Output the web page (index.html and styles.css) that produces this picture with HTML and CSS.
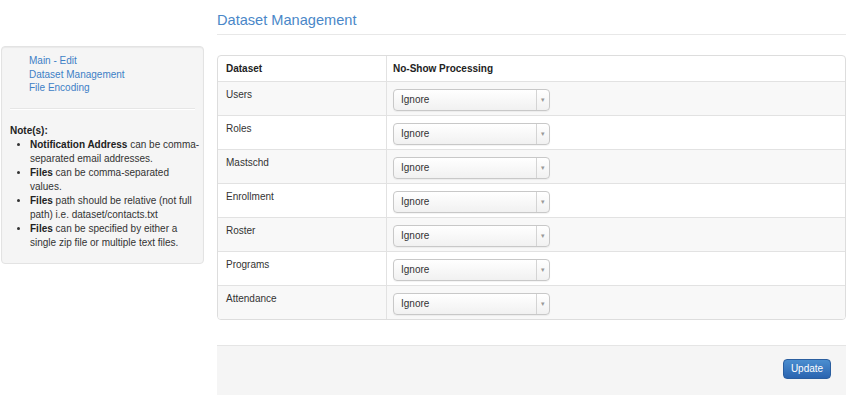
FILE: index.html
```html
<!DOCTYPE html>
<html lang="en">
<head>
    <meta charset="UTF-8">
    <title>Dataset Management</title>
    <link rel="stylesheet" href="styles.css">
</head>
<body>
    <div class="page">
        <div class="side_col">
            <div class="side_box">
                <ul class="side_links">
                    <li><a href="#">Main - Edit</a></li>
                    <li><a href="#">Dataset Management</a></li>
                    <li><a href="#">File Encoding</a></li>
                </ul>
                <hr class="side_rule">
                <div class="notes_title">Note(s):</div>
                <ul class="notes">
                    <li><b>Notification Address</b> can be comma-separated email addresses.</li>
                    <li><b>Files</b> can be comma-separated values.</li>
                    <li><b>Files</b> path should be relative (not full path) i.e. dataset/contacts.txt</li>
                    <li><b>Files</b> can be specified by either a single zip file or multiple text files.</li>
                </ul>
            </div>
        </div>
        <div class="main_col">
            <h1 class="title">Dataset Management</h1>
            <div class="table_box">
                <table class="data_table">
                    <thead>
                        <tr><th class="col_name">Dataset</th><th>No-Show Processing</th></tr>
                    </thead>
                    <tbody>
                        <tr><td>Users</td><td><div class="fake_select"><span class="sel_text">Ignore</span><span class="sel_arrow">&#9662;</span></div></td></tr>
                        <tr><td>Roles</td><td><div class="fake_select"><span class="sel_text">Ignore</span><span class="sel_arrow">&#9662;</span></div></td></tr>
                        <tr><td>Mastschd</td><td><div class="fake_select"><span class="sel_text">Ignore</span><span class="sel_arrow">&#9662;</span></div></td></tr>
                        <tr><td>Enrollment</td><td><div class="fake_select"><span class="sel_text">Ignore</span><span class="sel_arrow">&#9662;</span></div></td></tr>
                        <tr><td>Roster</td><td><div class="fake_select"><span class="sel_text">Ignore</span><span class="sel_arrow">&#9662;</span></div></td></tr>
                        <tr><td>Programs</td><td><div class="fake_select"><span class="sel_text">Ignore</span><span class="sel_arrow">&#9662;</span></div></td></tr>
                        <tr><td>Attendance</td><td><div class="fake_select"><span class="sel_text">Ignore</span><span class="sel_arrow">&#9662;</span></div></td></tr>
                    </tbody>
                </table>
            </div>
            <div class="form_actions">
                <button class="btn_update">Update</button>
            </div>
        </div>
    </div>
</body>
</html>
```

FILE: styles.css
```css
body
{
    margin: 0;
    font-family: "Liberation Sans", Arial, sans-serif;
    font-size: 10px;
    color: #333;
    background-color: #fff;
}
.page
{
    display: flex;
    padding: 0 4px 0 1px;
    gap: 13px;
}
.side_col
{
    width: 203px;
    flex: none;
    padding-top: 46px;
}
.side_box
{
    background-color: #f5f5f5;
    border: 1px solid #e3e3e3;
    border-radius: 4px;
    box-shadow: inset 0 1px 1px rgba(0, 0, 0, 0.05);
    padding: 7px 8px 13px 8px;
}
.side_links
{
    list-style: none;
    margin: 0;
    padding: 0 0 0 19px;
    line-height: 13.5px;
}
.side_links a
{
    color: #3d7fc6;
    text-decoration: none;
}
.side_rule
{
    border: 0;
    border-top: 1px solid #e6e6e6;
    border-bottom: 1px solid #fff;
    margin: 13px 0 14px 0;
}
.notes_title
{
    font-weight: bold;
    color: #222;
    line-height: 14px;
}
.notes
{
    margin: 0 -6px 0 0;
    padding-left: 20px;
    line-height: 14px;
    color: #333;
}
.notes b
{
    color: #222;
}
.main_col
{
    flex: 1;
    min-width: 0;
}
.title
{
    margin: 12px 0 20px 0;
    padding-bottom: 6px;
    border-bottom: 1px solid #e8e8e8;
    font-size: 14.6px;
    font-weight: normal;
    color: #4a87c8;
    line-height: 16px;
}
.table_box
{
    border: 1px solid #ddd;
    border-radius: 4px;
    overflow: hidden;
}
.data_table
{
    width: 100%;
    border-collapse: collapse;
}
.data_table th,
.data_table td
{
    text-align: left;
    vertical-align: top;
    line-height: 14px;
    padding: 6px 6px 4px 6px;
    border-top: 1px solid #e2e2e2;
}
.data_table th
{
    border-top: 0;
    padding: 6px 6px 5px 6px;
    font-weight: bold;
    color: #222;
}
.data_table th + th,
.data_table td + td
{
    border-left: 1px solid #e2e2e2;
}
.data_table th:first-child,
.data_table td:first-child
{
    padding-left: 8px;
}
.col_name
{
    width: 154px;
}
.data_table tbody tr:nth-child(odd) td
{
    background-color: #f8f8f8;
}
.fake_select
{
    width: 155px;
    height: 20px;
    border: 1px solid #c8c8c8;
    border-radius: 4px;
    background: linear-gradient(#fff, #f1f1f1);
    display: flex;
    align-items: center;
    box-shadow: 0 1px 1px rgba(0, 0, 0, 0.05);
    margin-top: 1px;
}
.sel_text
{
    flex: 1;
    padding-left: 7px;
    color: #333;
}
.sel_arrow
{
    width: 12px;
    height: 20px;
    line-height: 20px;
    border-left: 1px solid #d4d4d4;
    text-align: center;
    font-size: 7px;
    color: #999;
}
.form_actions
{
    margin-top: 25px;
    background-color: #f5f5f5;
    border-top: 1px solid #e5e5e5;
    height: 50px;
    padding: 13px 15px 0 0;
    display: flex;
    justify-content: flex-end;
    align-items: flex-start;
}
.btn_update
{
    font-family: "Liberation Sans", Arial, sans-serif;
    font-size: 10px;
    color: #fff;
    background: linear-gradient(#4b8ed0, #2a64b0);
    border: 1px solid #2a5e9f;
    border-radius: 4px;
    width: 48px;
    height: 20px;
    padding: 0;
    line-height: 18px;
}
```
